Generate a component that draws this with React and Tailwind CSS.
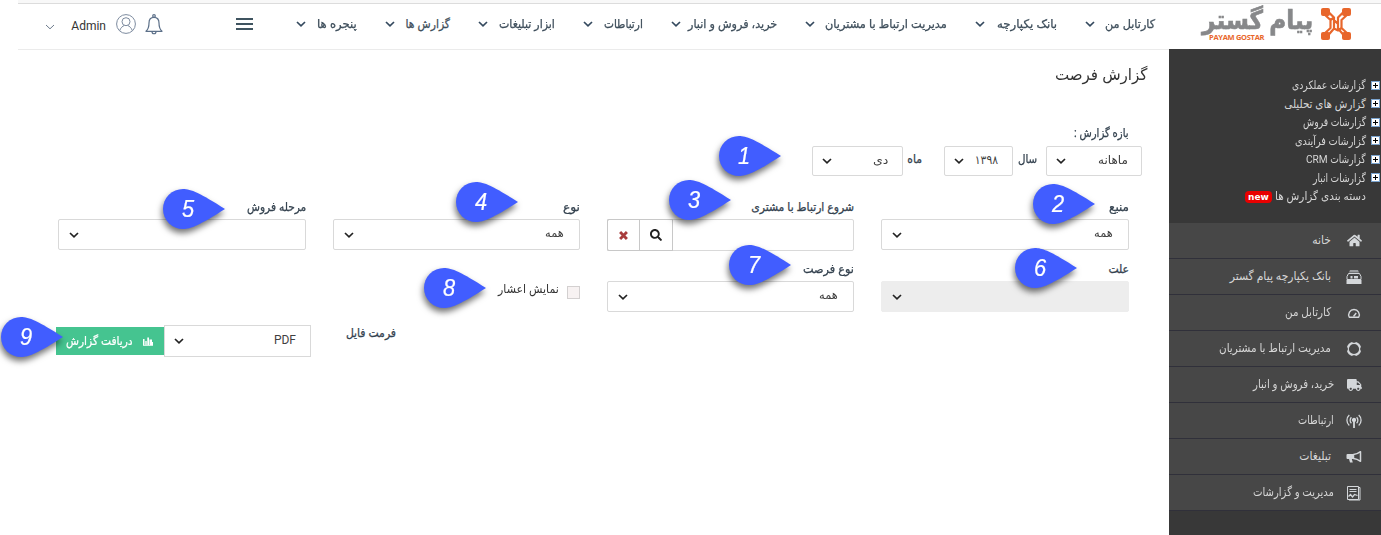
import React, { useLayoutEffect, useRef, useState } from "react";
import { FaSearch, FaHome, FaTruck } from "react-icons/fa";

// Text set to an exact width, condensed or widened as needed.
function Fit({ w, children, className = "" }) {
  const ref = useRef(null);
  const [scale, setScale] = useState(1);
  useLayoutEffect(() => {
    setScale(w / ref.current.offsetWidth);
  }, [w]);
  return (
    <span className={"flex shrink-0 justify-start whitespace-nowrap " + className} style={{ width: w }}>
      <span ref={ref} className="block shrink-0 origin-right" style={{ transform: `scaleX(${scale})` }}>
        {children}
      </span>
    </span>
  );
}

function Chevron({ className = "", thin = false }) {
  return (
    <svg viewBox="0 0 10 6" className={"h-[6px] w-[10px] shrink-0 " + className} fill="none" stroke="currentColor" strokeWidth={thin ? 1 : 1.7}>
      <path d="M1 1 L5 4.8 L9 1" />
    </svg>
  );
}

const nav = [
  ["کارتابل من", 50, 70],
  ["بانک یکپارچه", 60, 82],
  ["مدیریت ارتباط با مشتریان", 122, 142],
  ["خرید، فروش و انبار", 89, 106],
  ["ارتباطات", 39, 60],
  ["ابزار تبلیغات", 56, 77],
  ["گزارش ها", 44, 65],
  ["پنجره ها", 40, 61],
];

const tree = [
  ["گزارشات عملکردی", 74],
  ["گزارش های تحلیلی", 82],
  ["گزارشات فروش", 63],
  ["گزارشات فرآیندی", 71],
  ["گزارشات CRM", 60],
  ["گزارشات انبار", 53],
];

function BankIcon() {
  return (
    <svg viewBox="0 0 16 16" className="size-4" fill="none" stroke="currentColor">
      <path d="M4 1h8l1 2.500H3z" fill="currentColor" fillOpacity="0.6" stroke="none" />
      <path d="M2.500 4.500h11l1.500 3v3H1v-3z" />
      <path d="M0.500 11h15v4h-15z" fill="currentColor" stroke="none" />
      <path d="M4.500 7h2v2.500h-2zM8 7h4v2.500H8z" fill="currentColor" stroke="none" />
    </svg>
  );
}
function GaugeIcon() {
  return (
    <svg viewBox="0 0 16 16" className="size-4" fill="none" stroke="currentColor" strokeWidth="1.4">
      <path d="M3.300 12.300a5.300 5.300 0 1 1 9.400 0z" strokeLinejoin="round" />
      <path d="M7.500 11.500l2.700-3.500" />
    </svg>
  );
}
function RingIcon() {
  return (
    <svg viewBox="0 0 16 16" className="size-4" fill="none" stroke="currentColor">
      <circle cx="8" cy="8" r="6.200" strokeWidth="2.200" />
      <path d="M8 0v1.800M8 14.200v1.800M0 8h1.800M14.200 8h1.800" stroke="#474747" strokeWidth="3" />
    </svg>
  );
}
function AntennaIcon() {
  return (
    <svg viewBox="0 0 16 16" className="size-4" fill="none" stroke="currentColor" strokeWidth="1.300">
      <path d="M3.300 2a7 7 0 0 0 0 10.500M12.700 2a7 7 0 0 1 0 10.500M5.400 4.200a4.200 4.200 0 0 0 0 6M10.600 4.200a4.200 4.200 0 0 1 0 6" />
      <circle cx="8" cy="7" r="1.500" fill="currentColor" />
      <path d="M8 8v7" strokeWidth="1.800" />
    </svg>
  );
}
function HornIcon() {
  return (
    <svg viewBox="0 0 16 16" className="size-4" fill="none" stroke="currentColor">
      <path d="M1.500 5H7v5H5.800l1 3.500H4L3 10H1.500Q.5 10 .5 9V6Q.5 5 1.500 5z" fill="currentColor" stroke="none" />
      <path d="M7.500 5.500Q11 5.300 14.500 2.700V12.300Q11 9.800 7.500 9.500z" strokeWidth="1.500" strokeLinejoin="round" />
    </svg>
  );
}
function ReportIcon() {
  return (
    <svg viewBox="0 0 16 16" className="size-4" fill="none" stroke="currentColor">
      <path d="M1.500 1.500h11v13h-11zM12.500 2.500h1.500v12.500h-11" />
      <path d="M3.500 4.500h7M3.500 6.500h7" />
      <path d="M2.500 11.500l2-2 2 2.500 2-2.500 3 1" strokeWidth="1.300" />
    </svg>
  );
}

const menu = [
  ["خانه", 19, false, <FaHome className="size-[15px]" />],
  ["بانک یکپارچه پیام گستر", 101, false, <BankIcon />],
  ["کارتابل من", 46, false, <GaugeIcon />],
  ["مدیریت ارتباط با مشتریان", 112, false, <RingIcon />],
  ["خرید، فروش و انبار", 81, true, <FaTruck className="h-[12px] w-[15px]" />],
  ["ارتباطات", 36, true, <AntennaIcon />],
  ["تبلیغات", 32, false, <HornIcon />],
  ["مدیریت و گزارشات", 81, true, <ReportIcon />],
];

function PlusBox() {
  return (
    <svg viewBox="0 0 9 9" className="size-[9px]" shapeRendering="crispEdges">
      <rect width="9" height="9" fill="#7ba4cf" />
      <rect x="1" y="1" width="7" height="7" fill="#fff" />
      <path d="M4 2h1v2h2v1h-2v2h-1v-2h-2v-1h2z" fill="#000" />
    </svg>
  );
}

function Logo() {
  return (
    <div className="flex w-[149px] shrink-0 items-start gap-2 pt-1">
      <svg viewBox="0 0 30 32" className="h-8 w-[30px] shrink-0" fill="none" stroke="#e8662b" strokeWidth="2.200" strokeLinejoin="round">
        <g fill="#e8662b" stroke="none">
          <rect x="0" y="0" width="9" height="8" rx="2" />
          <rect x="21" y="0" width="9" height="8" rx="2" />
          <rect x="0" y="24" width="9" height="8" rx="2" />
          <rect x="21" y="24" width="9" height="8" rx="2" />
        </g>
        <path d="M3 6L9.500 12V20L3 26M27 6L20.500 12V20L27 26M7 3.500L13 9.500V20.500L7 27.500M23 3.500L17 9.500V20.500L23 27.500M9.500 12L13 9.500M13 20.500L17 22.500L20.500 20M13 12L17 16" />
      </svg>
      <div className="h-9 w-[111px]">
        <Fit w={111} className="text-[26px] leading-[25px] font-bold text-[#87888a] [-webkit-text-stroke:0.6px_#87888a]">پیام گستر</Fit>
        <div dir="ltr" className="pl-[7px] font-[Open_Sans] text-[7.500px] leading-[9px] font-bold tracking-[-0.3px] whitespace-nowrap text-[#e8662b]">
          PAYAM GOSTAR
        </div>
      </div>
    </div>
  );
}

function Header() {
  return (
    <header className="ml-[18px] flex h-[47px] items-start border-t border-b border-t-[#dcdcdc] border-b-[#ebebeb] pr-[30px]">
      <Logo />
      <nav className="mr-[47px] flex gap-[28px] pt-[8px]">
        {nav.map(([t, w, total]) => (
          <div key={t} className="flex items-center justify-between" style={{ width: total }}>
            <Fit w={w} className="text-[12px] leading-6 text-[#3f4f5c] [-webkit-text-stroke:0.25px_#3f4f5c]">{t}</Fit>
            <Chevron className="text-[#34495e]" />
          </div>
        ))}
      </nav>
      <div className="mt-[14px] mr-[43px] flex h-3 w-[17px] shrink-0 flex-col justify-between">
        <i className="h-[2px] bg-[#3f5460]" />
        <i className="h-[2px] bg-[#3f5460]" />
        <i className="h-[2px] bg-[#3f5460]" />
      </div>
      <svg viewBox="0 0 18 21" className="mt-[10px] mr-[73px] h-[21px] w-[18px] shrink-0" fill="none" stroke="#5c7089" strokeWidth="1.200">
        <circle cx="9" cy="2" r="1.300" />
        <path d="M9 3.300C5.500 3.300 4 6 4 9c0 4.500-1 6.500-3 8.300h16C15 15.500 14 13.500 14 9c0-3-1.500-5.700-5-5.700zM7 17.500c0 3 4 3 4 0" strokeLinejoin="round" />
      </svg>
      <svg viewBox="0 0 20 20" className="mt-[10px] mr-[9px] size-5 shrink-0" fill="none" stroke="#7d8b9f">
        <circle cx="10" cy="10" r="9.400" />
        <circle cx="10" cy="7.700" r="4" />
        <path d="M3.700 16.700c.8-3 3-4.500 4.600-5.200M16.300 16.700c-.8-3-3-4.500-4.600-5.200" />
      </svg>
      <span className="mt-[12px] mr-[10px] w-[34px] text-[12px] leading-5">Admin</span>
      <Chevron thin className="mt-[20px] mr-[17px] text-[#6d7b8c]" />
    </header>
  );
}

function Sidebar() {
  return (
    <aside className="h-[486px] w-[212px] shrink-0 bg-[#383838] pt-[27px] text-[#d6d6d6]">
      <div className="h-[147px] pr-px">
        {tree.map(([t, w]) => (
          <div key={t} className="flex h-[18.500px] items-center gap-[5px]">
            <PlusBox />
            <Fit w={w} className="text-[11.500px] leading-[18px]">{t}</Fit>
          </div>
        ))}
        <div className="flex h-[18.500px] items-center gap-[3px] pr-[14px]">
          <Fit w={91} className="text-[11.500px] leading-[18px]">دسته بندی گزارش ها</Fit>
          <span className="mt-[2px] flex h-3 w-[27px] items-center justify-center rounded-[4px] bg-[#e80000] font-[DejaVu_Sans] text-[9px] leading-3 font-bold text-white">new</span>
        </div>
      </div>
      {menu.map(([t, w, near, icon]) => (
        <div key={t} className="flex h-9 items-center border-b border-[#30303a] bg-[#474747] pr-[19px]">
          <span className={"flex w-4 items-center justify-center text-[#d4d7da] " + (near ? "ml-3" : "ml-[15px]")}>{icon}</span>
          <Fit w={w} className="-mt-[2px] text-[12px] leading-5">{t}</Fit>
        </div>
      ))}
    </aside>
  );
}

function Select({ className = "", children }) {
  return (
    <div className={"flex items-center justify-between rounded-[2px] border border-[#d9d9d9] text-[12px] text-[#3f3f3f] " + className}>
      <span className="-mt-[3px]">{children}</span>
      <Chevron className="text-[#222]" />
    </div>
  );
}

function Label({ w, children, className = "" }) {
  return <Fit w={w} className={"text-[12px] leading-5 text-[#34424f] [-webkit-text-stroke:0.25px_#34424f] " + className}>{children}</Fit>;
}

function Field({ label, w, children }) {
  return (
    <div>
      <Label w={w} className="mb-[2px]">{label}</Label>
      {children}
    </div>
  );
}

const pins = [
  [719, 136], [1033, 184], [669, 180], [456, 182], [163, 189],
  [1015, 248], [729, 245], [424, 268], [1, 317],
];

function Pin({ n, x, y }) {
  return (
    <div dir="ltr" className="absolute h-10 w-[62px] drop-shadow-[-1px_4px_3px_rgba(0,0,0,0.55)]" style={{ left: x, top: y }}>
      <svg viewBox="0 0 62 40" className="absolute inset-0 h-10 w-[62px]">
        <path d="M20 0C28 0 37 4 62 20C37 36 28 40 20 40A20 20 0 0 1 20 0z" fill="#415dff" />
      </svg>
      <span className="absolute top-[6px] left-[15px] w-5 scale-x-95 text-center font-[Liberation_Sans] text-[23px] leading-7 text-white italic [-webkit-text-stroke:0.2px_white]">{n}</span>
    </div>
  );
}

function Main() {
  return (
    <main className="min-w-0 flex-1 pt-[14px]">
      <Fit w={92} className="mr-[22px] text-[16px] leading-6 text-[#333]">گزارش فرصت</Fit>
      <div className="mt-[36px] mr-[40px]">
        <Label w={55}>بازه گزارش :</Label>
      </div>
      <div className="mt-[3px] mr-[27px] flex items-start">
        <Select className="h-[30px] w-[96px] pr-[13px] pl-[9px]"><Fit w={30}>ماهانه</Fit></Select>
        <Label w={19} className="mt-[3px] mr-[9px]">سال</Label>
        <Select className="mr-[5px] h-[30px] w-[69px] pr-[14px] pl-[9px]"><Fit w={23}>۱۳۹۸</Fit></Select>
        <Label w={15} className="mt-[3px] mr-[22px]">ماه</Label>
        <Select className="mr-[4px] h-[30px] w-[91px] pr-[14px] pl-[9px]"><Fit w={15}>دی</Fit></Select>
      </div>
      <div className="mt-[21px] mr-[40px] grid w-[1071px] grid-cols-[248px_247px_247px_248px] gap-x-[27px]">
        <div className="flex flex-col gap-[9px]">
          <Field label="منبع" w={20}>
            <Select className="h-[31px] pr-[15px] pl-[10px]"><Fit w={19}>همه</Fit></Select>
          </Field>
          <Field label="علت" w={21}>
            <Select className="h-[31px] border-[#ededed] bg-[#ededed] pr-[15px] pl-[10px]" />
          </Field>
        </div>
        <div className="flex flex-col gap-[8px]">
          <Field label="شروع ارتباط با مشتری" w={103}>
            <div className="flex h-8 rounded-[2px] border border-[#d9d9d9]">
              <div className="flex-1" />
              <div className="-my-px flex w-[34px] items-center justify-center border border-[#c8c8c8]">
                <FaSearch className="size-3 text-[#222]" />
              </div>
              <div className="-my-px -ml-px flex w-[32px] items-center justify-center rounded-l-[2px] border border-r-0 border-[#c8c8c8]">
                <svg viewBox="0 0 10 10" className="size-[9px]" stroke="#a83c3c" strokeWidth="3.200">
                  <path d="M1.200 1.200L8.800 8.800M8.800 1.200L1.200 8.800" />
                </svg>
              </div>
            </div>
          </Field>
          <Field label="نوع فرصت" w={51}>
            <Select className="h-[31px] pr-[15px] pl-[10px]"><Fit w={19}>همه</Fit></Select>
          </Field>
        </div>
        <div>
          <Field label="نوع" w={17}>
            <Select className="h-[31px] pr-[15px] pl-[10px]"><Fit w={19}>همه</Fit></Select>
          </Field>
          <div className="mt-[29px] flex items-center gap-2">
            <i className="mt-[1px] size-[13px] border border-[#d3d0d0] bg-[#f7f2f2]" />
            <Fit w={61} className="mb-[5px] text-[12px] leading-5 text-[#333]">نمایش اعشار</Fit>
          </div>
        </div>
        <Field label="مرحله فروش" w={59}>
          <Select className="h-[31px] pr-[15px] pl-[10px]" />
        </Field>
      </div>
      <div className="mt-[13px] mr-[773px] flex items-start">
        <Label w={50} className="mt-[-2px]">فرمت فایل</Label>
        <Select className="mr-[35px] h-8 w-[147px] rounded-none pr-[14px] pl-[9px]"><span className="font-[Roboto]">PDF</span></Select>
        <button className="mt-[2px] flex h-7 w-[108px] items-center gap-[10px] bg-[#45c490] pr-[11px] text-white">
          <svg viewBox="0 0 10 9" className="h-[9px] w-[10px]" fill="currentColor">
            <path d="M0 2h1.500v6H0zM2.300 4h1.400v4H2.300zM4.300 0.500h1.700v7.500H4.300zM6.500 2.500H9V5h1v3H6.500zM0 8.200h10v.8H0z" />
          </svg>
          <Fit w={67} className="text-[12px] leading-5 [-webkit-text-stroke:0.2px_white]">دریافت گزارش</Fit>
        </button>
      </div>
    </main>
  );
}

export default function App() {
  return (
    <div dir="rtl" className="relative h-[535px] w-[1381px] overflow-hidden bg-white font-[Roboto,'DejaVu_Sans_Condensed','DejaVu_Sans',sans-serif] text-[#333]">
      <div className="ml-[18px] h-[3px] bg-[#f8f8f8]" />
      <div className="-mb-px">
        <Header />
      </div>
      <div className="relative flex">
        <Sidebar />
        <Main />
      </div>
      {pins.map(([x, y], i) => (
        <Pin key={i} n={i + 1} x={x} y={y} />
      ))}
    </div>
  );
}
